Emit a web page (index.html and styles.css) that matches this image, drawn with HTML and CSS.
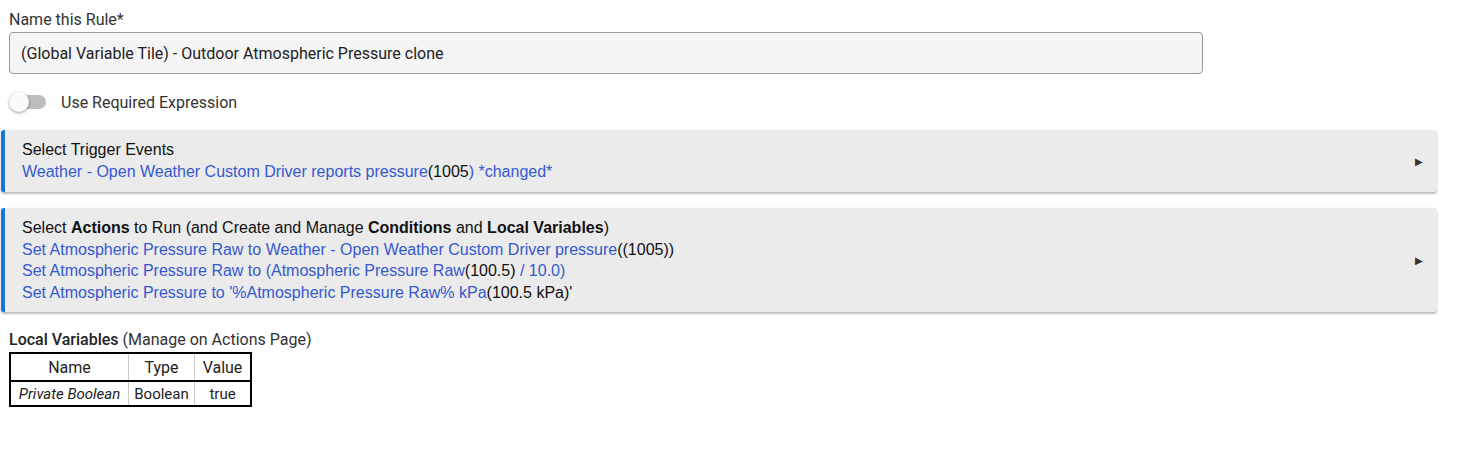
FILE: index.html
```html
<!DOCTYPE html>
<html lang="en">
<head>
  <meta charset="UTF-8">
  <title>Rule</title>
  <link rel="stylesheet" href="styles.css">
</head>
<body>
  <div class="page">
    <!-- rule name -->
    <div class="field">
      <label class="field-label">Name this Rule*</label>
      <input class="field-input" type="text" value="(Global Variable Tile) - Outdoor Atmospheric Pressure clone">
    </div>

    <!-- toggle -->
    <div class="switch-row">
      <span class="switch"><span class="switch-knob"></span></span>
      <span class="switch-label">Use Required Expression</span>
    </div>

    <!-- trigger events -->
    <div class="card card-trigger">
      <div class="card-body">
        <div>Select Trigger Events</div>
        <div class="link">Weather - Open Weather Custom Driver reports pressure<span class="val">(1005</span>) *changed*</div>
      </div>
      <span class="arrow">&#9654;</span>
    </div>

    <!-- actions -->
    <div class="card card-actions">
      <div class="card-body">
        <div>Select <b>Actions</b> to Run (and Create and Manage <b>Conditions</b> and <b>Local Variables</b>)</div>
        <div class="link">Set Atmospheric Pressure Raw to Weather - Open Weather Custom Driver pressure<span class="val">((1005))</span></div>
        <div class="link">Set Atmospheric Pressure Raw to (Atmospheric Pressure Raw<span class="val">(100.5)</span> / 10.0)</div>
        <div class="link">Set Atmospheric Pressure to '%Atmospheric Pressure Raw% kPa<span class="val">(100.5 kPa)'</span></div>
      </div>
      <span class="arrow">&#9654;</span>
    </div>

    <!-- local variables -->
    <div class="vars">
      <div class="vars-title"><b>Local Variables</b> (Manage on Actions Page)</div>
      <table class="vars-table">
        <tr>
          <th class="col-name">Name</th>
          <th class="col-type">Type</th>
          <th class="col-value">Value</th>
        </tr>
        <tr>
          <td class="col-name"><i>Private Boolean</i></td>
          <td class="col-type">Boolean</td>
          <td class="col-value">true</td>
        </tr>
      </table>
    </div>
  </div>
</body>
</html>
```

FILE: styles.css
```css
body {
  margin: 0;
  background: #ffffff;
  font-family: Roboto, "Liberation Sans", sans-serif;
  color: #222;
}

.page {
  padding: 10px 0 0 1px;
  width: 1436px;
}

.field {
  margin-left: 8px;
}

.field-label {
  display: block;
  font-size: 16px;
  color: #333;
  line-height: 20px;
}

.field-input {
  display: block;
  box-sizing: border-box;
  width: 1194px;
  height: 42px;
  margin-top: 2px;
  padding: 0 11px;
  border: 1px solid #9a9a9a;
  border-radius: 4px;
  background: #f5f5f5;
  font-family: Roboto, sans-serif;
  font-size: 16px;
  color: #222;
}

.switch-row {
  display: flex;
  align-items: center;
  margin: 17px 0 0 8px;
  height: 22px;
}

.switch {
  position: relative;
  display: inline-block;
  width: 36px;
  height: 14px;
  margin-left: 1px;
  border-radius: 7px;
  background: #bdbdbd;
}

.switch-knob {
  position: absolute;
  left: -1px;
  top: -3px;
  width: 20px;
  height: 20px;
  border-radius: 50%;
  background: #fafafa;
  box-shadow: 0 1px 3px rgba(0, 0, 0, 0.4);
}

.switch-label {
  margin-left: 15px;
  font-size: 16px;
  color: #333;
}

.card {
  display: flex;
  align-items: center;
  background: #ebebeb;
  border-left: 4px solid #1976d2;
  border-radius: 3px;
  box-shadow: 0 2px 2px rgba(0, 0, 0, 0.25), 0 0 2px rgba(0, 0, 0, 0.08);
  font-family: "Liberation Sans", Arial, sans-serif;
  font-size: 16px;
  color: #111;
}

.card-body {
  flex: 1;
  padding: 9px 17px;
  line-height: 22px;
}

.card-trigger {
  margin-top: 17px;
}

.card-trigger .card-body {
  padding-bottom: 9px;
}

.card-actions {
  margin-top: 16px;
}

.card-actions .card-body {
  line-height: 21.5px;
}

.link {
  color: #3559d0;
}

.val {
  color: #111;
}

.arrow {
  font-size: 10px;
  color: #333;
  margin-right: 14px;
}

.vars {
  margin: 18px 0 0 8px;
}

.vars-title {
  font-size: 16px;
  color: #333;
  line-height: 20px;
}

.vars-title b {
  font-weight: 500;
  color: #222;
}

.vars-table {
  margin-top: 2px;
  border-collapse: collapse;
  border: 2px solid #000;
}

.vars-table th {
  font-weight: 400;
  font-size: 16px;
  height: 26px;
  padding: 0 3px;
  border-bottom: 2px solid #000;
  border-left: 1px solid #c8c8c8;
}

.vars-table td {
  font-size: 15px;
  height: 23px;
  padding: 0 3px;
  text-align: center;
  border-left: 1px solid #c8c8c8;
}

.col-name {
  width: 111px;
}

.col-type {
  width: 59px;
}

.col-value {
  width: 49px;
}
```
